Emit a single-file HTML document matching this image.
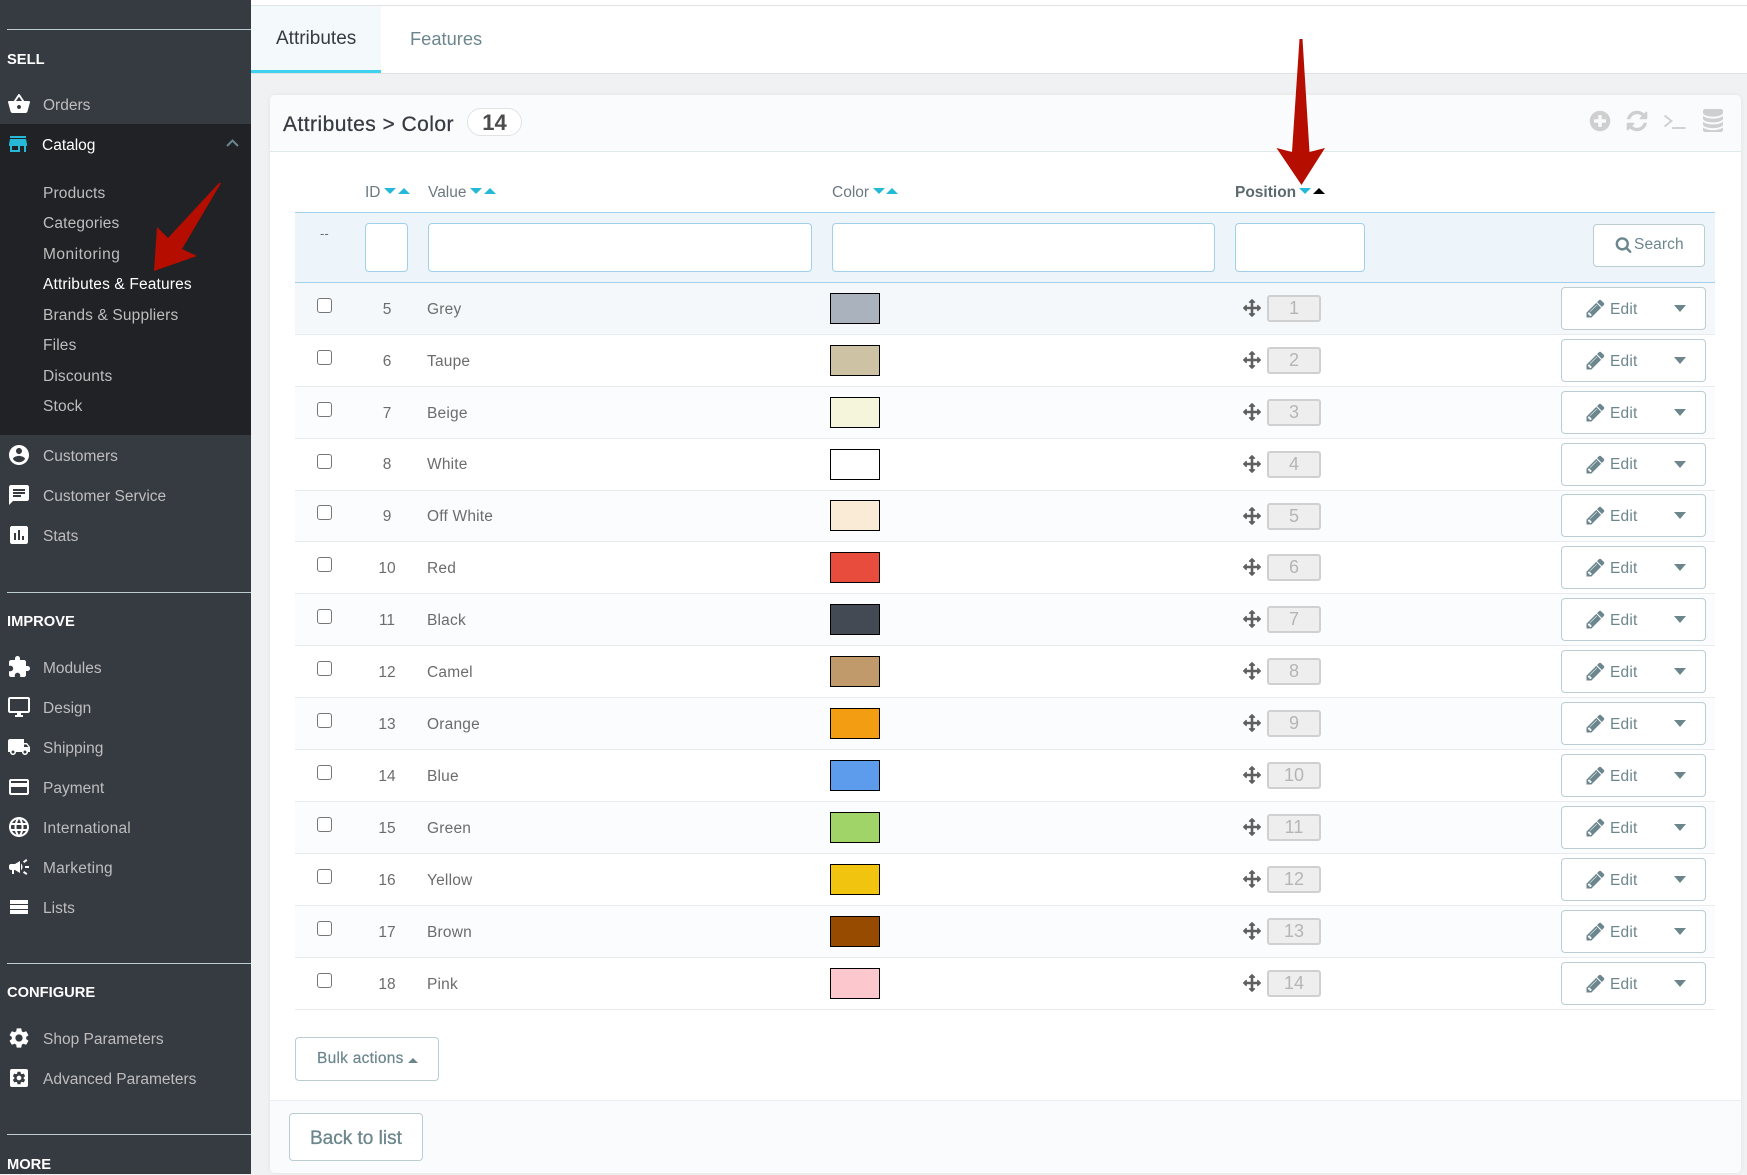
<!DOCTYPE html>
<html lang="en">
<head>
<meta charset="utf-8">
<title>Attributes &gt; Color</title>
<style>
html,body{margin:0;padding:0;width:1747px;height:1174px;overflow:hidden;background:#eff1f2;font-family:"Liberation Sans",Arial,sans-serif;font-size:15.5px;color:#6c6c6c}
*{box-sizing:border-box}
.a{position:absolute}
#side{position:absolute;left:0;top:0;width:251px;height:1174px;background:#363a41}
#cat{position:absolute;left:0;top:124px;width:251px;height:311px;background:#202226}
.hr{position:absolute;left:7px;width:244px;height:1px;background:#bbcdd2}
.h{position:absolute;left:7px;margin-top:2px;color:#fff;font-weight:bold;font-size:14.7px;line-height:20px}
.i{position:absolute;left:43px;margin-top:2px;color:#bebebe;font-size:15.5px;line-height:20px;white-space:nowrap}
.s{letter-spacing:.15px}
.ic{position:absolute;left:7px;width:24px;height:24px;fill:#fff}
.th{position:absolute;top:181px;margin-top:2px;line-height:20px;font-size:15.5px;color:#6c7a80;white-space:nowrap}
.cd,.cu{position:absolute;width:0;height:0;border-left:6px solid transparent;border-right:6px solid transparent}
.cd{top:188px;border-top:6px solid #25b9d7}
.cu{top:188px;border-bottom:6px solid #25b9d7}
.inp{position:absolute;top:223px;height:49px;background:#fff;border:1px solid #a0d0eb;border-radius:4px}
.r{position:absolute;left:295px;width:1420px;border-bottom:1px solid #e8ecee}
.r>*{position:absolute}
.ck{left:22px;top:15px;width:15px;height:15px;border:1.5px solid #767676;border-radius:3px;background:#fff}
.id{left:57px;width:70px;text-align:center;top:17px;line-height:20px}
.v{left:132px;top:17px;line-height:20px;letter-spacing:.2px}
.sw{left:535px;top:10px;width:50px;height:31px;border:1px solid #000}
.mv{left:947.5px;top:15.5px;width:18px;height:18px;fill:#5f5f5f}
.nb{left:972px;top:12px;width:54px;height:27px;background:#eee;border:2px solid #d0d0d0;border-radius:3px;text-align:center;color:#b5b5b5;font-size:18px;line-height:23px}
.ed{left:1266px;top:4px;width:145px;height:43px;background:#fff;border:1px solid #bbcdd2;border-radius:4px}
.ed svg{position:absolute;left:23px;top:10px;width:21px;height:21px;fill:#6c868e}
.ed b{position:absolute;left:48px;top:12px;font-weight:normal;font-size:15.5px;line-height:20px;color:#6c868e;letter-spacing:.2px}
.ed i{position:absolute;left:112px;top:17px;width:0;height:0;border-left:6.5px solid transparent;border-right:6.5px solid transparent;border-top:7px solid #6c868e}
.u .id,.u .v{top:16px}
.u .ed b{top:11px}
</style>
</head>
<body>
<svg width="0" height="0" style="position:absolute">
<symbol id="pen" viewBox="0 0 1792 1792"><path d="M491 1536l91-91-235-235-91 91v107h128v128h107zm523-928q0-22-22-22-10 0-17 7l-542 542q-7 7-7 17 0 22 22 22 10 0 17-7l542-542q7-7 7-17zm-54-192l416 416-832 832h-416v-416zm683 96q0 53-37 90l-166 166-416-416 166-165q36-38 90-38 53 0 91 38l235 234q37 39 37 91z"/></symbol>
<symbol id="mv" viewBox="0 0 1792 1792"><path d="M1792 896q0 26-19 45l-256 256q-19 19-45 19t-45-19-19-45v-128h-384v384h128q26 0 45 19t19 45-19 45l-256 256q-19 19-45 19t-45-19l-256-256q-19-19-19-45t19-45 45-19h128v-384h-384v128q0 26-19 45t-45 19-45-19l-256-256q-19-19-19-45t19-45l256-256q19-19 45-19t45 19 19 45v128h384v-384h-128q-26 0-45-19t-19-45 19-45l256-256q19-19 45-19t45 19l256 256q19 19 19 45t-19 45-45 19h-128v384h384v-128q0-26 19-45t45-19 45 19l256 256q19 19 19 45z"/></symbol>
</svg>

<div id="side">
  <div id="cat"></div>
  <div class="hr" style="top:29px"></div>
  <div class="h" style="top:48px">SELL</div>
  <svg class="ic" style="top:92px" viewBox="0 0 24 24"><path d="M17.21 9l-4.38-6.56c-.19-.28-.51-.42-.83-.42-.32 0-.64.14-.83.43L6.79 9H2c-.55 0-1 .45-1 1 0 .09.01.18.04.27l2.54 9.27c.23.84 1 1.46 1.92 1.46h13c.92 0 1.69-.62 1.93-1.46l2.54-9.27L23 10c0-.55-.45-1-1-1h-4.79zM9 9l3-4.4L15 9H9zm3 8c-1.1 0-2-.9-2-2s.9-2 2-2 2 .9 2 2-.9 2-2 2z"/></svg>
  <div class="i" style="top:94px">Orders</div>
  <svg class="ic" style="top:132px;left:6px;fill:#25b9d7" viewBox="0 0 24 24"><path d="M20 4H4v2h16V4zm1 10v-2l-1-5H4l-1 5v2h1v6h10v-6h4v6h2v-6h1zm-9 4H6v-4h6v4z"/></svg>
  <div class="i" style="top:134px;left:42px;color:#fff">Catalog</div>
  <svg class="a" style="left:225px;top:138px" width="15" height="10" viewBox="0 0 15 10"><path d="M2 8l5.500-5.500L13 8" fill="none" stroke="#6c868e" stroke-width="2"/></svg>
  <div class="i s" style="top:182px">Products</div>
  <div class="i s" style="top:212px">Categories</div>
  <div class="i s" style="top:243px;letter-spacing:.5px">Monitoring</div>
  <div class="i s" style="top:273px;color:#fff">Attributes &amp; Features</div>
  <div class="i s" style="top:304px">Brands &amp; Suppliers</div>
  <div class="i s" style="top:334px">Files</div>
  <div class="i s" style="top:365px">Discounts</div>
  <div class="i s" style="top:395px">Stock</div>
  <svg class="ic" style="top:443px" viewBox="0 0 24 24"><path d="M12 2C6.48 2 2 6.48 2 12s4.480 10 10 10 10-4.480 10-10S17.520 2 12 2zm0 3c1.660 0 3 1.340 3 3s-1.340 3-3 3-3-1.340-3-3 1.340-3 3-3zm0 14.200c-2.500 0-4.710-1.280-6-3.220.03-1.990 4-3.080 6-3.080 1.990 0 5.970 1.090 6 3.080-1.290 1.940-3.500 3.220-6 3.220z"/></svg>
  <div class="i" style="top:445px">Customers</div>
  <svg class="ic" style="top:483px" viewBox="0 0 24 24"><path d="M20 2H4c-1.100 0-1.990.9-1.990 2L2 22l4-4h14c1.100 0 2-.9 2-2V4c0-1.100-.9-2-2-2zM6 9h12v2H6V9zm8 5H6v-2h8v2zm4-6H6V6h12v2z"/></svg>
  <div class="i" style="top:485px">Customer Service</div>
  <svg class="ic" style="top:523px" viewBox="0 0 24 24"><path d="M19 3H5c-1.100 0-2 .9-2 2v14c0 1.100.9 2 2 2h14c1.100 0 2-.9 2-2V5c0-1.100-.9-2-2-2zM9 17H7v-7h2v7zm4 0h-2V7h2v10zm4 0h-2v-4h2v4z"/></svg>
  <div class="i" style="top:525px">Stats</div>

  <div class="hr" style="top:592px"></div>
  <div class="h" style="top:610px">IMPROVE</div>
  <svg class="ic" style="top:655px" viewBox="0 0 24 24"><path d="M20.500 11H19V7c0-1.100-.9-2-2-2h-4V3.500C13 2.120 11.880 1 10.500 1S8 2.120 8 3.500V5H4c-1.100 0-1.990.9-1.990 2v3.800H3.500c1.490 0 2.700 1.210 2.700 2.700s-1.210 2.700-2.700 2.700H2V20c0 1.100.9 2 2 2h3.800v-1.500c0-1.490 1.210-2.700 2.700-2.700 1.490 0 2.700 1.210 2.700 2.700V22H17c1.100 0 2-.9 2-2v-4h1.500c1.380 0 2.500-1.120 2.500-2.500S21.880 11 20.500 11z"/></svg>
  <div class="i" style="top:657px">Modules</div>
  <svg class="ic" style="top:695px" viewBox="0 0 24 24"><path d="M21 2H3c-1.100 0-2 .9-2 2v12c0 1.100.9 2 2 2h7v2H8v2h8v-2h-2v-2h7c1.100 0 2-.9 2-2V4c0-1.100-.9-2-2-2zm0 14H3V4h18v12z"/></svg>
  <div class="i" style="top:697px">Design</div>
  <svg class="ic" style="top:735px" viewBox="0 0 24 24"><path d="M20 8h-3V4H3c-1.100 0-2 .9-2 2v11h2c0 1.660 1.340 3 3 3s3-1.340 3-3h6c0 1.660 1.340 3 3 3s3-1.340 3-3h2v-5l-3-4zM6 18.500c-.83 0-1.500-.67-1.500-1.500s.67-1.500 1.500-1.500 1.500.67 1.500 1.500-.67 1.500-1.500 1.500zm13.500-9l1.960 2.500H17V9.500h2.500zm-1.500 9c-.83 0-1.500-.67-1.500-1.500s.67-1.500 1.500-1.500 1.500.67 1.500 1.500-.67 1.500-1.500 1.500z"/></svg>
  <div class="i" style="top:737px">Shipping</div>
  <svg class="ic" style="top:775px" viewBox="0 0 24 24"><path d="M20 4H4c-1.110 0-1.990.89-1.990 2L2 18c0 1.110.89 2 2 2h16c1.110 0 2-.89 2-2V6c0-1.110-.89-2-2-2zm0 14H4v-6h16v6zm0-10H4V6h16v2z"/></svg>
  <div class="i" style="top:777px">Payment</div>
  <svg class="ic" style="top:815px" viewBox="0 0 24 24"><path d="M11.990 2C6.470 2 2 6.480 2 12s4.470 10 9.990 10C17.520 22 22 17.520 22 12S17.520 2 11.990 2zm6.930 6h-2.950c-.32-1.250-.78-2.450-1.380-3.560 1.840.63 3.370 1.910 4.330 3.560zM12 4.040c.83 1.200 1.480 2.530 1.910 3.960h-3.820c.43-1.430 1.080-2.760 1.910-3.960zM4.260 14C4.100 13.360 4 12.690 4 12s.1-1.360.26-2h3.380c-.08.66-.14 1.320-.14 2 0 .68.06 1.340.14 2H4.260zm.82 2h2.950c.32 1.250.78 2.450 1.380 3.560-1.840-.63-3.370-1.900-4.330-3.560zm2.950-8H5.080c.96-1.660 2.490-2.930 4.330-3.560C8.810 5.550 8.350 6.750 8.030 8zM12 19.960c-.83-1.200-1.480-2.530-1.910-3.960h3.820c-.43 1.430-1.080 2.760-1.910 3.960zM14.340 14H9.660c-.09-.66-.16-1.320-.16-2 0-.68.07-1.350.16-2h4.680c.09.65.16 1.320.16 2 0 .68-.07 1.340-.16 2zm.25 5.560c.6-1.110 1.060-2.310 1.380-3.560h2.950c-.96 1.650-2.490 2.930-4.330 3.560zM16.360 14c.08-.66.14-1.320.14-2 0-.68-.06-1.340-.14-2h3.380c.16.64.26 1.310.26 2s-.1 1.360-.26 2h-3.380z"/></svg>
  <div class="i" style="top:817px;letter-spacing:.2px">International</div>
  <svg class="ic" style="top:855px" viewBox="0 0 24 24"><path d="M18 11v2h4v-2h-4zm-2 6.610c.96.71 2.210 1.650 3.200 2.390.4-.53.8-1.070 1.200-1.600-.99-.74-2.240-1.680-3.200-2.400-.4.54-.8 1.080-1.200 1.610zM20.400 5.600c-.4-.53-.8-1.070-1.200-1.600-.99.74-2.240 1.680-3.200 2.400.4.53.8 1.070 1.200 1.600.96-.72 2.210-1.650 3.200-2.400zM4 9c-1.100 0-2 .9-2 2v2c0 1.100.9 2 2 2h1v4h2v-4h1l5 3V6L8 9H4zm11.500 3c0-1.330-.58-2.530-1.500-3.350v6.690c.92-.81 1.500-2.010 1.500-3.340z"/></svg>
  <div class="i" style="top:857px;letter-spacing:.2px">Marketing</div>
  <svg class="ic" style="top:895px" viewBox="0 0 24 24"><path d="M3 5h18v4H3zM3 10h18v4H3zM3 15h18v4H3z"/></svg>
  <div class="i" style="top:897px">Lists</div>

  <div class="hr" style="top:963px"></div>
  <div class="h" style="top:981px">CONFIGURE</div>
  <svg class="ic" style="top:1026px" viewBox="0 0 24 24"><path d="M19.140 12.940c.04-.3.06-.61.06-.94 0-.32-.02-.64-.07-.94l2.030-1.580c.18-.14.23-.41.12-.61l-1.920-3.320c-.12-.22-.37-.29-.59-.22l-2.390.96c-.5-.38-1.030-.7-1.620-.94l-.36-2.540c-.04-.24-.24-.41-.48-.41h-3.840c-.24 0-.43.17-.47.41l-.36 2.540c-.59.24-1.130.57-1.620.94l-2.390-.96c-.22-.08-.47 0-.59.22L2.740 8.870c-.12.21-.08.47.12.61l2.030 1.580c-.05.3-.09.63-.09.94s.02.64.07.94l-2.030 1.580c-.18.14-.23.41-.12.61l1.920 3.320c.12.22.37.29.59.22l2.390-.96c.5.38 1.030.7 1.620.94l.36 2.540c.05.24.24.41.48.41h3.840c.24 0 .44-.17.47-.41l.36-2.540c.59-.24 1.130-.56 1.620-.94l2.390.96c.22.08.47 0 .59-.22l1.920-3.320c.12-.22.07-.47-.12-.61l-2.010-1.580zM12 15.600c-1.980 0-3.600-1.620-3.600-3.600s1.620-3.600 3.600-3.600 3.600 1.620 3.600 3.600-1.620 3.600-3.600 3.600z"/></svg>
  <div class="i" style="top:1028px">Shop Parameters</div>
  <svg class="ic" style="top:1066px" viewBox="0 0 24 24"><rect x="3" y="3" width="18" height="18" rx="2"/><g transform="translate(4.2 4.2) scale(.65)" fill="#363a41"><path d="M19.140 12.940c.04-.3.06-.61.06-.94 0-.32-.02-.64-.07-.94l2.030-1.580c.18-.14.23-.41.12-.61l-1.920-3.320c-.12-.22-.37-.29-.59-.22l-2.390.96c-.5-.38-1.030-.7-1.620-.94l-.36-2.540c-.04-.24-.24-.41-.48-.41h-3.840c-.24 0-.43.17-.47.41l-.36 2.540c-.59.24-1.130.57-1.620.94l-2.390-.96c-.22-.08-.47 0-.59.22L2.740 8.870c-.12.21-.08.47.12.61l2.030 1.580c-.05.3-.09.63-.09.94s.02.64.07.94l-2.030 1.580c-.18.14-.23.41-.12.61l1.920 3.320c.12.22.37.29.59.22l2.390-.96c.5.38 1.030.7 1.620.94l.36 2.540c.05.24.24.41.48.41h3.840c.24 0 .44-.17.47-.41l.36-2.540c.59-.24 1.130-.56 1.620-.94l2.390.96c.22.08.47 0 .59-.22l1.920-3.320c.12-.22.07-.47-.12-.61l-2.010-1.580zM12 15.600c-1.980 0-3.600-1.620-3.600-3.600s1.620-3.600 3.600-3.600 3.600 1.620 3.600 3.600-1.620 3.600-3.600 3.600z"/></g></svg>
  <div class="i" style="top:1068px">Advanced Parameters</div>

  <div class="hr" style="top:1134px"></div>
  <div class="h" style="top:1153px">MORE</div>
</div>

<!-- top tabs -->
<div class="a" style="left:251px;top:0;width:1496px;height:74px;background:#fff;border-bottom:1px solid #dfe3e4">
  <div class="a" style="left:0;top:0;width:1496px;height:6px;border-bottom:1px solid #dfe3e4"></div>
  <div class="a" style="left:0;top:6px;width:130px;height:67px;background:#f4f9fb;border-bottom:3px solid #3ed2f0"></div>
  <div class="a" style="left:25px;top:27px;font-size:19px;line-height:24px;color:#363a41">Attributes</div>
  <div class="a" style="left:159px;top:27px;font-size:18.3px;line-height:24px;color:#6c868e">Features</div>
</div>

<!-- panel -->
<div class="a" style="left:270px;top:95px;width:1471px;height:1078px;background:#fff;border-radius:5px;box-shadow:0 0 4px rgba(0,0,0,.06)">
  <div class="a" style="left:0;top:0;width:1471px;height:57px;background:#fafbfc;border-bottom:1px solid #dfe8ea;border-radius:5px 5px 0 0"></div>
  <div class="a" style="left:13px;top:16px;font-size:21px;line-height:27px;color:#363a41;letter-spacing:.45px;-webkit-text-stroke:.25px #363a41;white-space:nowrap">Attributes &gt; Color</div>
  <div class="a" style="left:197px;top:13px;width:55px;height:28px;border:1px solid #dfe3e4;border-radius:14px;background:#fff;text-align:center;font-size:22px;font-weight:bold;line-height:27px;color:#4c4c4c">14</div>
  <svg class="a" style="left:1318px;top:14px;fill:#cfcfcf" width="24" height="24" viewBox="0 0 1792 1792"><path d="M1344 960v-128q0-26-19-45t-45-19h-256v-256q0-26-19-45t-45-19h-128q-26 0-45 19t-19 45v256h-256q-26 0-45 19t-19 45v128q0 26 19 45t45 19h256v256q0 26 19 45t45 19h128q26 0 45-19t19-45v-256h256q26 0 45-19t19-45zm320-64q0 209-103 385.500t-279.500 279.500-385.500 103-385.500-103-279.500-279.500-103-385.500 103-385.500 279.500-279.500 385.500-103 385.500 103 279.500 279.500 103 385.500z"/></svg>
  <svg class="a" style="left:1355px;top:14px;fill:#cfcfcf" width="24" height="24" viewBox="0 0 1792 1792"><path d="M1639 1056q0 5-1 7-64 268-268 434.500t-478 166.500q-146 0-282.500-55t-243.500-157l-129 129q-19 19-45 19t-45-19-19-45v-448q0-26 19-45t45-19h448q26 0 45 19t19 45-19 45l-137 137q71 66 161 102t187 36q134 0 250-65t186-179q11-17 53-117 8-23 30-23h192q13 0 22.500 9.500t9.500 22.500zm25-800v448q0 26-19 45t-45 19h-448q-26 0-45-19t-19-45 19-45l138-138q-148-137-349-137-134 0-250 65t-186 179q-11 17-53 117-8 23-30 23h-199q-13 0-22.500-9.500t-9.500-22.500v-7q65-268 270-434.500t480-166.500q146 0 284 55.500t245 156.500l130-129q19-19 45-19t45 19 19 45z"/></svg>
  <svg class="a" style="left:1393px;top:18px" width="24" height="18" viewBox="0 0 24 18"><path d="M1.500 2.500l7 5.500-7 5.500" fill="none" stroke="#cfcfcf" stroke-width="1.800"/><path d="M9 15h13.500" stroke="#cfcfcf" stroke-width="1.800"/></svg>
  <svg class="a" style="left:1433px;top:14px;fill:#cfcfcf" width="20" height="23" viewBox="128 128 1536 1536" preserveAspectRatio="none"><path d="M896 768q237 0 443-43t325-127v170q0 69-103 128t-280 93.500-385 34.500-385-34.500-280-93.500-103-128v-170q119 84 325 127t443 43zm0 768q237 0 443-43t325-127v170q0 69-103 128t-280 93.500-385 34.500-385-34.500-280-93.500-103-128v-170q119 84 325 127t443 43zm0-384q237 0 443-43t325-127v170q0 69-103 128t-280 93.500-385 34.500-385-34.500-280-93.500-103-128v-170q119 84 325 127t443 43zm0-1152q208 0 385 34.500t280 93.500 103 128v128q0 69-103 128t-280 93.500-385 34.500-385-34.500-280-93.500-103-128v-128q0-69 103-128t280-93.500 385-34.500z"/></svg>
  <div class="a" style="left:0;top:1005px;width:1471px;height:73px;background:#fafbfc;border-top:1px solid #ecefef;border-radius:0 0 5px 5px"></div>
</div>

<!-- table head -->
<div class="th" style="left:365px">ID</div>
<i class="cd" style="left:384px"></i><i class="cu" style="left:398px"></i>
<div class="th" style="left:428px">Value</div>
<i class="cd" style="left:470px"></i><i class="cu" style="left:484px"></i>
<div class="th" style="left:832px">Color</div>
<i class="cd" style="left:873px"></i><i class="cu" style="left:886px"></i>
<div class="th" style="left:1235px;font-weight:bold;color:#5c6a70">Position</div>
<i class="cd" style="left:1299px"></i><i class="cu" style="left:1313px;border-bottom-color:#000"></i>

<!-- filter row -->
<div class="a" style="left:295px;top:212px;width:1420px;height:71px;background:#edf5fb;border-top:1px solid #a0d0eb;border-bottom:1px solid #a0d0eb"></div>
<div class="a" style="left:320px;top:226px;font-size:13px;line-height:16px;color:#6c6c6c">--</div>
<div class="inp" style="left:365px;width:43px"></div>
<div class="inp" style="left:428px;width:384px"></div>
<div class="inp" style="left:832px;width:383px"></div>
<div class="inp" style="left:1235px;width:130px"></div>
<div class="a" style="left:1593px;top:224px;width:112px;height:43px;background:#fff;border:1px solid #bbcdd2;border-radius:4px">
  <svg class="a" style="left:21px;top:11px;fill:#6c868e" width="17" height="17" viewBox="0 0 1792 1792"><path d="M1216 832q0-185-131.500-316.500t-316.500-131.500-316.500 131.500-131.500 316.500 131.500 316.500 316.500 131.500 316.500-131.500 131.500-316.500zm512 832q0 52-38 90t-90 38q-54 0-90-38l-343-342q-179 124-399 124-143 0-273.500-55.500t-225-150-150-225-55.500-273.500 55.500-273.500 150-225 225-150 273.500-55.500 273.500 55.500 225 150 150 225 55.500 273.500q0 220-124 399l343 343q37 37 37 90z"/></svg>
  <div class="a" style="left:40px;top:10px;line-height:20px;color:#6c868e;letter-spacing:.1px">Search</div>
</div>

<!-- rows -->
<div class="r" style="top:283px;height:52px;background:#f4f8fb"><span class="ck"></span><span class="id">5</span><span class="v">Grey</span><span class="sw" style="background:#aab2bd"></span><svg class="mv"><use href="#mv"/></svg><span class="nb">1</span><div class="ed"><svg><use href="#pen"/></svg><b>Edit</b><i></i></div></div>
<div class="r" style="top:335px;height:52px;background:#fff"><span class="ck"></span><span class="id">6</span><span class="v">Taupe</span><span class="sw" style="background:#cec2a5"></span><svg class="mv"><use href="#mv"/></svg><span class="nb">2</span><div class="ed"><svg><use href="#pen"/></svg><b>Edit</b><i></i></div></div>
<div class="r" style="top:387px;height:52px;background:#fbfcfe"><span class="ck"></span><span class="id">7</span><span class="v">Beige</span><span class="sw" style="background:#f5f5dc"></span><svg class="mv"><use href="#mv"/></svg><span class="nb">3</span><div class="ed"><svg><use href="#pen"/></svg><b>Edit</b><i></i></div></div>
<div class="r u" style="top:439px;height:52px;background:#fff"><span class="ck"></span><span class="id">8</span><span class="v">White</span><span class="sw" style="background:#fff"></span><svg class="mv"><use href="#mv"/></svg><span class="nb">4</span><div class="ed"><svg><use href="#pen"/></svg><b>Edit</b><i></i></div></div>
<div class="r u" style="top:491px;height:51px;background:#fbfcfe"><span class="ck" style="top:14px"></span><span class="id">9</span><span class="v">Off White</span><span class="sw" style="background:#faebd7;top:9px"></span><svg class="mv"><use href="#mv"/></svg><span class="nb">5</span><div class="ed" style="top:3px"><svg><use href="#pen"/></svg><b style="top:12px">Edit</b><i></i></div></div>
<div class="r" style="top:542px;height:52px;background:#fff"><span class="ck"></span><span class="id">10</span><span class="v">Red</span><span class="sw" style="background:#e84c3d"></span><svg class="mv"><use href="#mv"/></svg><span class="nb">6</span><div class="ed"><svg><use href="#pen"/></svg><b>Edit</b><i></i></div></div>
<div class="r" style="top:594px;height:52px;background:#fbfcfe"><span class="ck"></span><span class="id">11</span><span class="v">Black</span><span class="sw" style="background:#434a54"></span><svg class="mv"><use href="#mv"/></svg><span class="nb">7</span><div class="ed"><svg><use href="#pen"/></svg><b>Edit</b><i></i></div></div>
<div class="r" style="top:646px;height:52px;background:#fff"><span class="ck"></span><span class="id">12</span><span class="v">Camel</span><span class="sw" style="background:#c19a6b"></span><svg class="mv"><use href="#mv"/></svg><span class="nb">8</span><div class="ed"><svg><use href="#pen"/></svg><b>Edit</b><i></i></div></div>
<div class="r" style="top:698px;height:52px;background:#fbfcfe"><span class="ck"></span><span class="id">13</span><span class="v">Orange</span><span class="sw" style="background:#f39d12"></span><svg class="mv"><use href="#mv"/></svg><span class="nb">9</span><div class="ed"><svg><use href="#pen"/></svg><b>Edit</b><i></i></div></div>
<div class="r" style="top:750px;height:52px;background:#fff"><span class="ck"></span><span class="id">14</span><span class="v">Blue</span><span class="sw" style="background:#5d9cec"></span><svg class="mv"><use href="#mv"/></svg><span class="nb">10</span><div class="ed"><svg><use href="#pen"/></svg><b>Edit</b><i></i></div></div>
<div class="r" style="top:802px;height:52px;background:#fbfcfe"><span class="ck"></span><span class="id">15</span><span class="v">Green</span><span class="sw" style="background:#a0d468"></span><svg class="mv"><use href="#mv"/></svg><span class="nb">11</span><div class="ed"><svg><use href="#pen"/></svg><b>Edit</b><i></i></div></div>
<div class="r" style="top:854px;height:52px;background:#fff"><span class="ck"></span><span class="id">16</span><span class="v">Yellow</span><span class="sw" style="background:#f1c40f"></span><svg class="mv"><use href="#mv"/></svg><span class="nb">12</span><div class="ed"><svg><use href="#pen"/></svg><b>Edit</b><i></i></div></div>
<div class="r" style="top:906px;height:52px;background:#fbfcfe"><span class="ck"></span><span class="id">17</span><span class="v">Brown</span><span class="sw" style="background:#964b00"></span><svg class="mv"><use href="#mv"/></svg><span class="nb">13</span><div class="ed"><svg><use href="#pen"/></svg><b>Edit</b><i></i></div></div>
<div class="r" style="top:958px;height:52px;background:#fff"><span class="ck"></span><span class="id">18</span><span class="v">Pink</span><span class="sw" style="background:#fcc8cd"></span><svg class="mv"><use href="#mv"/></svg><span class="nb">14</span><div class="ed"><svg><use href="#pen"/></svg><b>Edit</b><i></i></div></div>

<!-- buttons -->
<div class="a" style="left:295px;top:1037px;width:144px;height:44px;background:#fff;border:1px solid #bbcdd2;border-radius:4px">
  <div class="a" style="left:21px;top:11px;line-height:20px;color:#6c868e;white-space:nowrap;letter-spacing:.25px;-webkit-text-stroke:.2px #6c868e">Bulk actions</div>
  <i class="a" style="left:112px;top:20px;width:0;height:0;border-left:5px solid transparent;border-right:5px solid transparent;border-bottom:5px solid #6c868e"></i>
</div>
<div class="a" style="left:289px;top:1113px;width:134px;height:48px;background:#fff;border:1px solid #bbcdd2;border-radius:4px">
  <div class="a" style="left:20px;top:13px;font-size:19px;line-height:24px;color:#6c868e;white-space:nowrap;-webkit-text-stroke:.3px #6c868e">Back to list</div>
</div>

<!-- red arrows -->
<svg class="a" style="left:0;top:0;pointer-events:none" width="1747" height="1174" viewBox="0 0 1747 1174">
  <polygon points="221,183 182,249 197,256 154,271 157,227 168,238 219,183" fill="#b50e00"/>
  <polygon points="1299.500,39 1302.500,39 1309.500,152 1325,148 1301.500,185 1276.500,148 1292,152" fill="#b50e00"/>
</svg>
</body>
</html>
